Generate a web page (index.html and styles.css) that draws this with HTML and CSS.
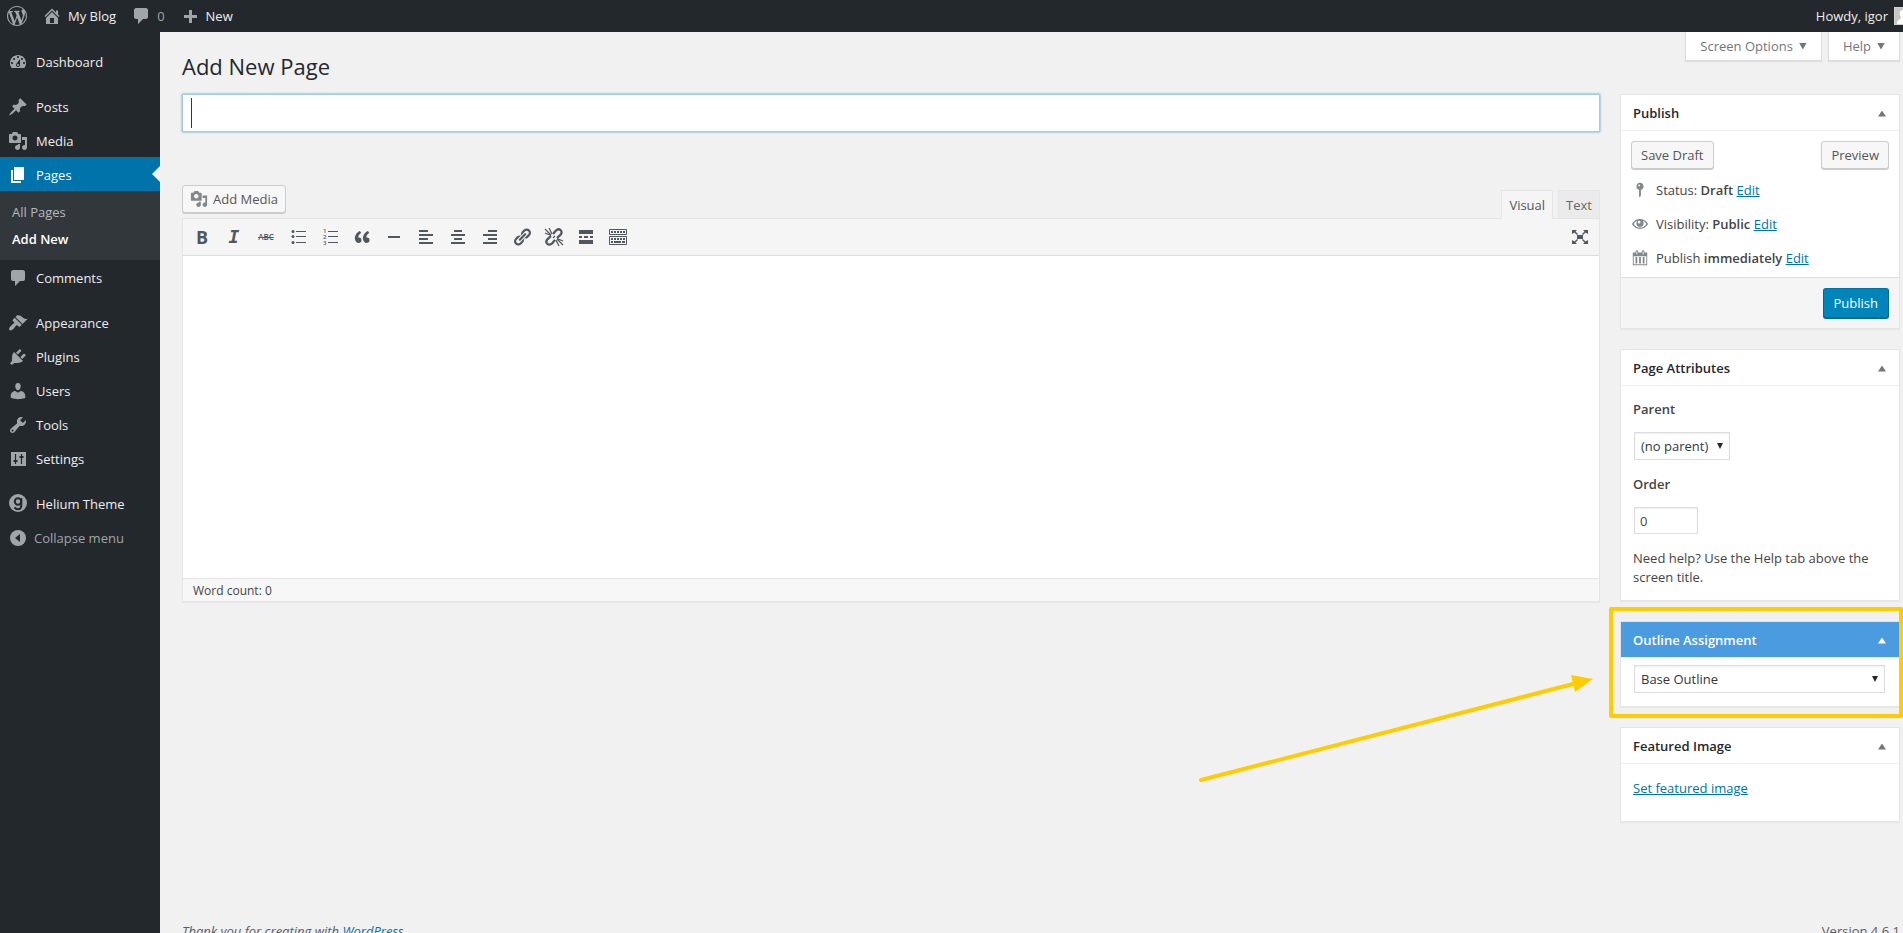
FILE: index.html
```
<!DOCTYPE html>
<html lang="en">
<head>
<meta charset="utf-8">
<title>Add New Page</title>
<link rel="stylesheet" href="styles.css">
</head>
<body>
<svg class="sprite" aria-hidden="true">
  <symbol id="media" viewBox="0 0 20 20"><path d="M13 11V4c0-.55-.45-1-1-1h-1.670L9 1H5L3.670 3H2c-.55 0-1 .45-1 1v7c0 .55.45 1 1 1h10c.55 0 1-.45 1-1zM7 4.500c1.380 0 2.500 1.120 2.500 2.500S8.380 9.500 7 9.500 4.500 8.380 4.500 7 5.620 4.500 7 4.500zM14 6h5v10.500c0 1.380-1.120 2.500-2.500 2.500S14 17.880 14 16.500s1.120-2.500 2.500-2.500c.17 0 .34.02.5.05V9h-3V6zm-4 8.050V13h2v3.500c0 1.380-1.120 2.500-2.500 2.500S7 17.880 7 16.500 8.120 14 9.500 14c.17 0 .34.02.5.05z"/></symbol>
  <symbol id="comment" viewBox="0 0 20 20"><path d="M5 2h10c1 0 2 1 2 2v7c0 1-1 2-2 2h-3l-5 5v-5H5c-1 0-2-1-2-2V4c0-1 1-2 2-2z"/></symbol>
</svg>

<header class="adminbar">
  <a class="bar-item" href="#" aria-label="About WordPress"><svg class="icon" viewBox="0 0 20 20"><path d="M20 10c0-5.510-4.490-10-10-10C4.480 0 0 4.490 0 10c0 5.520 4.480 10 10 10 5.510 0 10-4.480 10-10zM7.780 15.370L4.370 6.220c.55-.02 1.170-.08 1.170-.08.5-.06.44-1.130-.06-1.110 0 0-1.450.11-2.370.11-.18 0-.37 0-.58-.01C4.120 2.690 6.870 1.110 10 1.110c2.330 0 4.450.87 6.050 2.340-.68-.11-1.650.39-1.650 1.580 0 .74.45 1.360.9 2.100.35.61.55 1.360.55 2.460 0 1.490-1.400 5-1.400 5l-3.030-8.370c.54-.02.82-.17.82-.17.5-.05.44-1.250-.06-1.220 0 0-1.440.12-2.380.12-.87 0-2.330-.12-2.330-.12-.5-.03-.56 1.200-.06 1.220l.92.08 1.260 3.410zM17.410 10c.24-.64.74-1.870.43-4.250.7 1.290 1.050 2.710 1.050 4.250 0 3.290-1.730 6.240-4.400 7.780.97-2.590 1.940-5.200 2.920-7.780zM6.100 18.090C3.120 16.650 1.110 13.530 1.110 10c0-1.300.23-2.480.72-3.590C3.250 10.300 4.670 14.200 6.100 18.090zm4.030-6.630l2.580 6.980c-.86.29-1.760.45-2.710.45-.79 0-1.570-.11-2.290-.33.81-2.380 1.620-4.740 2.420-7.100z"/></svg></a>
  <a class="bar-item" href="#"><svg class="icon" viewBox="0 0 20 20"><path fill-rule="evenodd" d="M16 8.500l1.530 1.530-1.060 1.060L10 4.600l-6.470 6.490-1.060-1.060L10 2.500l4 4v-2h2v4zm-6-2.460l6 5.990V18H4v-5.970zM12 17v-5H8v5h4z"/></svg>My Blog</a>
  <a class="bar-item muted" href="#" aria-label="0 comments"><svg class="icon" aria-hidden="true"><use href="#comment"/></svg>0</a>
  <a class="bar-item" href="#"><svg class="icon" viewBox="0 0 20 20"><path d="M17 9v3h-5v5H9v-5H4V9h5V4h3v5z"/></svg>New</a>
  <a class="bar-item account" href="#">Howdy, igor<svg class="avatar" viewBox="0 0 9 18"><path fill="#d2d2d2" d="M0 0h9v18H0z"/><path fill="#c5c5c5" d="M1 1h8v16H1z"/><path fill="#fff" d="M9 3C6 3 5 6 6 8s1 3 0 4-3 1-3 5h6z"/></svg></a>
</header>

<div class="shell">
  <nav class="menu" aria-label="Main menu">
    <a class="item" href="#"><svg class="icon" viewBox="0 0 20 20"><path fill-rule="evenodd" d="M3.760 16h12.480c1.100-1.370 1.760-3.110 1.760-5 0-4.420-3.580-8-8-8s-8 3.580-8 8c0 1.890.66 3.630 1.760 5zM10 4c.55 0 1 .45 1 1s-.45 1-1 1-1-.45-1-1 .45-1 1-1zM6 6c.55 0 1 .45 1 1s-.45 1-1 1-1-.45-1-1 .45-1 1-1zm8 0c.55 0 1 .45 1 1s-.45 1-1 1-1-.45-1-1 .45-1 1-1zm-5.370 5.550L12 7v6c0 1.100-.9 2-2 2s-2-.9-2-2c0-.57.24-1.080.63-1.450zM4 10c.55 0 1 .45 1 1s-.45 1-1 1-1-.45-1-1 .45-1 1-1zm12 0c.55 0 1 .45 1 1s-.45 1-1 1-1-.45-1-1 .45-1 1-1zm-5 3c0-.55-.45-1-1-1s-1 .45-1 1 .45 1 1 1 1-.45 1-1z"/></svg>Dashboard</a>
    <a class="item spaced" href="#"><svg class="icon" viewBox="0 0 20 20"><path d="M10.440 3.020l1.820-1.820 6.360 6.350-1.830 1.820c-1.050-.68-2.480-.57-3.410.36l-.75.75c-.92.93-1.040 2.350-.35 3.410l-1.830 1.820-2.410-2.410-2.800 2.790c-.42.42-3.380 2.710-3.800 2.290s1.860-3.390 2.280-3.810l2.790-2.790L4.100 9.360l1.830-1.820c1.050.69 2.480.57 3.400-.36l.75-.75c.93-.92 1.050-2.350.36-3.410z"/></svg>Posts</a>
    <a class="item" href="#"><svg class="icon"><use href="#media"/></svg>Media</a>
    <a class="item current" href="#" aria-current="page"><svg class="icon" viewBox="0 0 20 20"><path d="M6 15V2h10v13H6zm-1 1h8v2H3V5h2v11z"/></svg>Pages</a>
    <div class="submenu">
      <a href="#">All Pages</a>
      <a class="active" href="#">Add New</a>
    </div>
    <a class="item" href="#"><svg class="icon"><use href="#comment"/></svg>Comments</a>
    <a class="item spaced" href="#"><svg class="icon" viewBox="0 0 20 20"><path d="M14.480 11.060L7.410 3.990l1.500-1.500c.5-.56 2.300-.47 3.510.32 1.210.8 1.430 1.280 2.910 2.100 1.180.64 2.450 1.260 4.450.85zm-.71.71L6.700 4.700 4.930 6.470c-.39.39-.39 1.020 0 1.410l1.060 1.060c.39.39.39 1.030 0 1.420-.6.6-1.430 1.110-2.210 1.690-.35.26-.7.53-1.010.84C1.430 14.230.4 16.080 1.400 17.070c.99 1 2.840-.03 4.180-1.360.31-.31.58-.66.85-1.020.57-.78 1.080-1.610 1.690-2.210.39-.39 1.020-.39 1.410 0l1.060 1.060c.39.39 1.020.39 1.410 0z"/></svg>Appearance</a>
    <a class="item" href="#"><svg class="icon" viewBox="0 0 20 20"><path d="M13.110 4.360L9.870 7.600 8 5.730l3.240-3.240c.35-.34 1.050-.2 1.560.32.52.51.66 1.210.31 1.550zm-8 1.770l.91-1.120 9.010 9.010-1.190.84c-.71.71-2.630 1.160-3.820 1.160H6.140L4.900 17.260c-.59.59-1.540.59-2.120 0-.59-.58-.59-1.530 0-2.120l1.240-1.240v-3.880c0-1.130.4-3.190 1.090-3.890zm7.260 3.970l3.240-3.240c.34-.35 1.040-.21 1.550.31.52.51.66 1.210.31 1.550l-3.240 3.250z"/></svg>Plugins</a>
    <a class="item" href="#"><svg class="icon" viewBox="0 0 20 20"><path d="M10 9.250c-2.270 0-2.730-3.440-2.730-3.440C7 4.020 7.820 2 9.970 2c2.160 0 2.980 2.020 2.710 3.810 0 0-.41 3.440-2.680 3.440zm0 2.570L12.720 10c2.390 0 4.520 2.330 4.520 4.530v2.490s-3.650 1.130-7.240 1.130c-3.650 0-7.240-1.130-7.240-1.130v-2.490c0-2.250 1.940-4.480 4.470-4.480z"/></svg>Users</a>
    <a class="item" href="#"><svg class="icon" viewBox="0 0 20 20"><path fill-rule="evenodd" d="M16.680 9.770c-1.340 1.340-3.300 1.670-4.950.99l-5.410 6.520c-.99.99-2.590.99-3.580 0s-.99-2.590 0-3.570l6.520-5.420c-.68-1.650-.35-3.610.99-4.950 1.280-1.280 3.120-1.620 4.720-1.060l-2.890 2.890 2.820 2.820 2.860-2.870c.53 1.580.18 3.390-1.080 4.650zM3.810 16.210c.4.39 1.040.39 1.430 0 .4-.4.4-1.040 0-1.430-.39-.4-1.030-.4-1.430 0-.39.39-.39 1.030 0 1.430z"/></svg>Tools</a>
    <a class="item" href="#"><svg class="icon" viewBox="0 0 20 20"><path d="M3 3h15v14H3z"/><path fill="none" stroke="#23282d" stroke-width="1.200" d="M7.500 5v10M13.500 5v10"/><path fill="#23282d" d="M5.500 11h4v2h-4zM11.500 7h4v2h-4z"/></svg>Settings</a>
    <a class="item spaced" href="#"><svg class="icon" viewBox="0 0 20 20"><circle cx="10" cy="9" r="9"/><g fill="none" stroke="#23282d" stroke-width="2"><circle cx="10" cy="7.500" r="3.200"/><path d="M13.300 4v7c0 3-1 4.200-3.300 4.200-1.500 0-2.500-.5-3.500-1.700"/></g></svg>Helium Theme</a>
    <button class="item collapse" type="button"><svg class="icon" viewBox="0 0 20 20"><circle cx="10" cy="10" r="8"/><path fill="#23282d" d="M12 6v8l-5-4z"/></svg>Collapse menu</button>
  </nav>

  <main class="content">
    <div class="page-head">
      <h1>Add New Page</h1>
      <div class="screen-links">
        <button type="button">Screen Options<span class="tri down"></span></button>
        <button type="button">Help<span class="tri down"></span></button>
      </div>
    </div>

    <div class="columns">
      <section class="editor-col">
        <div class="title-wrap"><input type="text" aria-label="Enter title here"></div>
        <div class="editor-tools">
          <button class="button" type="button"><svg class="icon"><use href="#media"/></svg>Add Media</button>
          <div class="tabs">
            <button class="tab on" type="button">Visual</button>
            <button class="tab" type="button">Text</button>
          </div>
        </div>
        <div class="editor">
          <div class="toolbar">
            <button type="button" class="bold" aria-label="Bold">B</button>
            <button type="button" class="italic" aria-label="Italic">I</button>
            <button type="button" class="strike" aria-label="Strikethrough">ABC</button>
            <button type="button" aria-label="Bulleted list"><svg viewBox="0 0 20 20"><path d="M8 4h10v1H8zM8 9h10v1H8zM8 15h10v1H8z"/><circle cx="5" cy="4.500" r="1.500"/><circle cx="5" cy="9.500" r="1.500"/><circle cx="5" cy="15.500" r="1.500"/></svg></button>
            <button type="button" aria-label="Numbered list"><svg viewBox="0 0 20 20"><path d="M8 4h10v1H8zM8 9h10v1H8zM8 15h10v1H8z"/><g class="digits"><text x="3" y="6">1</text><text x="3" y="12">2</text><text x="3" y="18">3</text></g></svg></button>
            <button type="button" aria-label="Blockquote"><svg viewBox="0 0 20 20"><path d="M9.490 13.220c0-.74-.2-1.380-.61-1.900-.62-.78-1.830-.88-2.530-.72-.29-1.650 1.110-3.750 2.920-4.650L7.880 4c-2.730 1.300-5.420 4.280-4.960 8.050C3.210 14.430 4.590 16 6.540 16c.85 0 1.560-.25 2.120-.75s.83-1.180.83-2.030zm8.050 0c0-.74-.2-1.380-.61-1.900-.63-.78-1.830-.88-2.530-.72-.29-1.650 1.110-3.750 2.920-4.650L15.930 4c-2.730 1.300-5.410 4.280-4.950 8.050.29 2.380 1.660 3.950 3.610 3.950.85 0 1.560-.25 2.120-.75s.83-1.180.83-2.030z"/></svg></button>
            <button type="button" aria-label="Horizontal line"><svg viewBox="0 0 20 20"><path d="M4 9h12v2H4z"/></svg></button>
            <button type="button" aria-label="Align left"><svg viewBox="0 0 20 20"><path d="M12 5V3H3v2h9zm5 4V7H3v2h14zm-5 4v-2H3v2h9zm5 4v-2H3v2h14z"/></svg></button>
            <button type="button" aria-label="Align center"><svg viewBox="0 0 20 20"><path d="M14 5V3H6v2h8zm3 4V7H3v2h14zm-3 4v-2H6v2h8zm3 4v-2H3v2h14z"/></svg></button>
            <button type="button" aria-label="Align right"><svg viewBox="0 0 20 20"><path d="M17 5V3H8v2h9zm0 4V7H3v2h14zm0 4v-2H8v2h9zm0 4v-2H3v2h14z"/></svg></button>
            <button type="button" aria-label="Insert link"><svg viewBox="0 0 20 20"><path d="M17.740 2.760c1.680 1.690 1.680 4.410 0 6.100l-1.530 1.520c-1.120 1.120-2.700 1.470-4.140 1.090l2.620-2.610.76-.77.76-.76c.84-.84.84-2.200 0-3.040-.84-.85-2.200-.85-3.040 0l-.77.76-3.380 3.380c-.37-1.440-.02-3.020 1.100-4.140l1.520-1.530c1.690-1.680 4.420-1.680 6.100 0zM8.590 13.430l5.340-5.340c.42-.42.42-1.100 0-1.520-.44-.43-1.130-.39-1.530 0l-5.330 5.340c-.42.42-.42 1.100 0 1.520.44.43 1.130.39 1.520 0zm-.76 2.290l4.140-4.150c.38 1.440.03 3.020-1.090 4.140l-1.520 1.530c-1.690 1.680-4.410 1.680-6.100 0-1.680-1.680-1.680-4.420 0-6.100l1.530-1.520c1.120-1.120 2.700-1.470 4.140-1.100l-4.140 4.150c-.85.84-.85 2.200 0 3.050.84.84 2.200.84 3.040 0z"/></svg></button>
            <button type="button" aria-label="Remove link"><svg viewBox="0 0 20 20"><g fill="none" stroke="currentColor" stroke-width="2.300"><path d="M9 7l3-3.500c1.500-1.500 3.500-1.500 4.700-.3s1.200 3.200-.3 4.700L13 11M11 13l-3 3.500c-1.500 1.500-3.500 1.500-4.700.3s-1.200-3.200.3-4.700L7 9"/><path stroke-width="1.200" d="M1 2l6 6M5 1l3 6M1 6l6 2.500M19 18l-6-6M15 19l-3-6M19 14l-6-2.500M9 11l2-2"/></g></svg></button>
            <button type="button" aria-label="Insert Read More tag"><svg viewBox="0 0 20 20"><path d="M17 7V3H3v4h14zM6 11V9H3v2h3zm6 0V9H8v2h4zm5 0V9h-3v2h3zm0 6v-4H3v4h14z"/></svg></button>
            <button type="button" aria-label="Toolbar toggle"><svg viewBox="0 0 20 20"><g fill="none" stroke="currentColor"><path d="M1.500 2.500h17v5h-17zM1.500 9.500h17v8h-17z"/><path stroke-width="2" stroke-dasharray="2 1" d="M3 5h14"/><path stroke-width="2" stroke-dasharray="2 1" d="M3 12h14"/><path stroke-width="2" d="M3 15h2M6 15h7M14 15h3"/></g></svg></button>
            <button type="button" class="fullscreen" aria-label="Distraction-free writing"><svg viewBox="0 0 20 20"><path d="M7 8h6v4H7zM2 3h5L5.500 4.500 8 7 7 8 4.500 5.500 2 7zM18 3v4l-2.500-1.500L13 8l-1-1 2.500-2.500L13 3zM2 17v-4l2.500 1.500L7 12l1 1-2.500 2.500L7 17zM18 17h-5l1.500-1.500L12 13l1-1 2.500 2.500L18 13z"/></svg></button>
          </div>
          <textarea aria-label="Page content"></textarea>
          <div class="status">Word count: 0</div>
        </div>
      </section>

      <aside class="side">
        <section class="box">
          <h2>Publish<span class="tri up"></span></h2>
          <div class="publish-top">
            <div class="row"><button class="button" type="button">Save Draft</button><button class="button" type="button">Preview</button></div>
            <p><svg class="icon" viewBox="0 0 20 20"><path fill-rule="evenodd" d="M14 6c0 1.860-1.280 3.410-3 3.860V16c0 1-2 2-2 2V9.860c-1.720-.45-3-2-3-3.860 0-2.210 1.790-4 4-4s4 1.790 4 4zM8 5c0 .55.45 1 1 1s1-.45 1-1-.45-1-1-1-1 .45-1 1z"/></svg><span>Status: <b>Draft</b> <a href="#">Edit</a></span></p>
            <p><svg class="icon" viewBox="0 0 20 20"><path fill-rule="evenodd" d="M1 10c2-3.500 5.400-5.500 9-5.500s7 2 9 5.500c-2 3.500-5.400 5.500-9 5.500S3 13.500 1 10zm2 0c1.500 2.700 4 4 7 4s5.500-1.300 7-4c-1-1.800-2.300-2.900-4-3.500.6.800 1 1.600 1 2.600a4 4 0 0 1-8 0c0-1 .4-1.800 1-2.600C5.300 7.100 4 8.200 3 10zm6-3.500a1.500 1.500 0 1 0 0 3 1.500 1.500 0 0 0 0-3z"/></svg><span>Visibility: <b>Public</b> <a href="#">Edit</a></span></p>
            <p><svg class="icon" viewBox="0 0 20 20"><path fill-rule="evenodd" d="M15 4h3v14H2V4h3V3c0-.83.67-1.500 1.500-1.500S8 2.170 8 3v1h4V3c0-.83.67-1.500 1.500-1.500S15 2.170 15 3v1zM6 3v2.500c0 .28.22.5.5.5s.5-.22.5-.5V3c0-.28-.22-.5-.5-.5S6 2.720 6 3zm7 0v2.500c0 .28.22.5.5.5s.5-.22.5-.5V3c0-.28-.22-.5-.5-.5s-.5.22-.5.5zm4 14V8H3v9h14z"/><path d="M5 9h2v7H5zM9 9h2v7H9zM13 9h2v7h-2z"/></svg><span>Publish <b>immediately</b> <a href="#">Edit</a></span></p>
          </div>
          <div class="publish-foot"><button class="button primary" type="button">Publish</button></div>
        </section>

        <section class="box">
          <h2>Page Attributes<span class="tri up"></span></h2>
          <div class="inside">
            <label for="parent">Parent</label>
            <span class="select"><select id="parent"><option>(no parent)</option></select></span>
            <label for="order">Order</label>
            <input id="order" class="order" type="text" value="0">
            <p class="hint">Need help? Use the Help tab above the screen title.</p>
          </div>
        </section>

        <section class="box outline">
          <h2>Outline Assignment<span class="tri up"></span></h2>
          <div class="outline-body"><span class="select wide"><select aria-label="Outline"><option>Base Outline</option></select></span></div>
          <div class="frame"></div>
          <svg class="arrow" viewBox="0 0 400 114"><path fill="none" stroke="#fc0" stroke-width="4" stroke-linecap="round" d="M6 109L382 12"/><path fill="#fc0" d="M398 8l-22-4 4 17z"/></svg>
        </section>

        <section class="box">
          <h2>Featured Image<span class="tri up"></span></h2>
          <div class="featured"><a href="#">Set featured image</a></div>
        </section>
      </aside>
    </div>

    <footer class="footer"><em>Thank you for creating with <a href="#">WordPress</a>.</em><span>Version 4.6.1</span></footer>
  </main>
</div>
</body>
</html>
```
FILE: styles.css
```
* { box-sizing: border-box; }
body {
  margin: 0;
  height: 100vh;
  overflow: hidden;
  background: #f1f1f1;
  color: #444;
  font: 13px/20px "Open Sans", "Noto Sans", sans-serif;
}
button, input, select, textarea { font: inherit; color: inherit; margin: 0; }
button { cursor: pointer; }
a { color: #0073aa; }
b { font-weight: 600; }
h1, h2, p { margin: 0; }
svg { display: block; fill: currentColor; flex: none; }
.sprite { display: none; }
.icon { width: 20px; height: 20px; }

.adminbar { display: flex; height: 32px; padding-left: 7px; background: #23282d; }
.bar-item { display: flex; align-items: center; gap: 6px; margin-right: 15px; color: #eee; text-decoration: none; }
.bar-item .icon, .muted { color: #a0a5aa; }
.account { margin: 0 0 0 auto; }
.avatar { width: 9px; height: 18px; }

.shell { display: flex; min-height: calc(100vh - 32px); }
.menu { width: 160px; flex: none; padding-top: 12px; background: #23282d; }
.item {
  display: flex;
  align-items: center;
  gap: 8px;
  width: 100%;
  height: 34px;
  padding: 1px 8px 0;
  border: 0;
  background: none;
  color: #eee;
  text-decoration: none;
  position: relative;
}
.item .icon { color: #a0a5aa; }
.spaced { margin-top: 11px; }
.current { background: #0073aa; color: #fff; }
.current .icon { color: #fff; }
.current::after {
  content: "";
  position: absolute;
  right: 0;
  top: 9px;
  border: 8px solid transparent;
  border-left: 0;
  border-right-color: #f1f1f1;
}
.submenu { padding: 8px 12px 7px; background: #32373c; }
.submenu a { display: block; line-height: 27px; color: #b4b9be; text-decoration: none; }
.submenu .active { color: #fff; font-weight: 600; }
.collapse { color: #a0a5aa; gap: 6px; }

.content { flex: 1; min-width: 0; padding: 0 3px 0 22px; }
.page-head { display: flex; justify-content: space-between; height: 62px; }
.page-head h1 { padding-top: 19px; color: #23282d; font-size: 22px; font-weight: 400; line-height: 30px; }
.screen-links { display: flex; gap: 6px; }
.screen-links button {
  display: flex;
  align-items: center;
  gap: 6px;
  height: 29px;
  padding: 0 14px;
  border: 1px solid #ddd;
  border-top: 0;
  background: #fff;
  box-shadow: 0 1px 1px rgba(0, 0, 0, .08);
  color: #72777c;
}
.tri { width: 8px; height: 7px; background: #72777c; }
.down { clip-path: polygon(0 0, 100% 0, 50% 100%); }
.up { height: 6px; margin-top: 2px; clip-path: polygon(0 100%, 100% 100%, 50% 0); }

.columns { display: grid; grid-template-columns: minmax(0, 1fr) 280px; gap: 20px; }
.title-wrap { position: relative; }
.title-wrap::before { content: ""; position: absolute; left: 9px; top: 4px; width: 1px; height: 30px; background: #32373c; }
.title-wrap input {
  display: block;
  width: 100%;
  height: 38px;
  padding: 3px 8px;
  border: 1px solid #a6cbe0;
  background: #fff;
  box-shadow: 0 0 2px rgba(30, 140, 190, .8);
  font-size: 22px;
  outline: 0;
}
.editor-tools { display: flex; justify-content: space-between; align-items: flex-end; margin-top: 53px; }
.editor-tools .button { margin-bottom: 5px; padding: 0 7px; }
.editor-tools .icon { width: 18px; height: 18px; color: #82878c; }
.tabs { display: flex; gap: 5px; }
.tab { height: 28px; padding: 0 7px; border: 1px solid #e5e5e5; border-bottom: 0; background: #ebebeb; color: #666; }
.tab.on { position: relative; margin-bottom: -1px; height: 29px; background: #f5f5f5; color: #555; }
.button {
  display: flex;
  align-items: center;
  gap: 5px;
  height: 28px;
  padding: 0 9px;
  border: 1px solid #ccc;
  border-radius: 3px;
  background: #f7f7f7;
  box-shadow: 0 1px 0 #ccc;
  color: #555;
}
.primary {
  height: 30px;
  padding: 0 10px;
  border-color: #0073aa #006799 #006799;
  background: #0085ba;
  box-shadow: 0 1px 0 #006799;
  color: #fff;
}

.editor { border: 1px solid #e5e5e5; box-shadow: 0 1px 1px rgba(0, 0, 0, .04); }
.toolbar { display: flex; height: 37px; padding: 0 3px; border-bottom: 1px solid #ddd; background: #f5f5f5; }
.toolbar button {
  display: flex;
  align-items: center;
  justify-content: center;
  width: 32px;
  padding: 0;
  border: 0;
  background: none;
  color: #50575e;
}
.toolbar svg { width: 20px; height: 20px; }
.toolbar .bold { font-size: 18px; font-weight: 700; }
.toolbar .italic { font: italic 700 18px/20px "DejaVu Sans Mono", monospace; }
.toolbar .strike { font-size: 8px; font-weight: 600; text-decoration: line-through; }
.digits { font-size: 6px; font-weight: 600; }
.toolbar .fullscreen { margin-left: auto; }
.editor textarea { display: block; width: 100%; height: 322px; border: 0; background: #fff; resize: none; outline: 0; }
.status { height: 23px; padding: 0 10px; border-top: 1px solid #e5e5e5; background: #f7f7f7; font-size: 12px; line-height: 23px; }

.side { display: flex; flex-direction: column; gap: 20px; }
.box { border: 1px solid #e5e5e5; background: #fff; box-shadow: 0 1px 1px rgba(0, 0, 0, .04); }
.box h2 {
  display: flex;
  align-items: center;
  justify-content: space-between;
  height: 36px;
  padding: 0 13px 0 12px;
  border-bottom: 1px solid #eee;
  color: #23282d;
  font-size: 13px;
  font-weight: 600;
}
.publish-top { padding: 10px 10px 2px; }
.row { display: flex; justify-content: space-between; margin-bottom: 4px; }
.publish-top p { display: flex; align-items: center; gap: 7px; height: 34px; }
.publish-top .icon { width: 18px; height: 18px; color: #82878c; }
.publish-foot { display: flex; justify-content: flex-end; padding: 10px; border-top: 1px solid #ddd; background: #f5f5f5; }
.inside { display: flex; flex-direction: column; align-items: flex-start; padding: 13px 12px; }
.inside label { font-weight: 600; margin-bottom: 13px; }
.select { position: relative; display: block; margin-left: 1px; }
.select select {
  appearance: none;
  display: block;
  width: 100%;
  height: 28px;
  padding: 0 20px 0 6px;
  border: 1px solid #ddd;
  border-radius: 0;
  background: #fff;
  box-shadow: inset 0 1px 2px rgba(0, 0, 0, .07);
  color: #32373c;
}
.select::after {
  content: "";
  position: absolute;
  right: 7px;
  top: 11px;
  width: 6px;
  height: 6px;
  background: #23282d;
  clip-path: polygon(0 0, 100% 0, 50% 100%);
  pointer-events: none;
}
.inside .select { margin-bottom: 14px; }
.order { width: 64px; height: 27px; margin: 0 0 15px 1px; padding: 3px 5px; border: 1px solid #ddd; box-shadow: inset 0 1px 2px rgba(0, 0, 0, .07); }
.hint { line-height: 19px; }

.outline { position: relative; }
.box.outline h2 { background: #4b9be0; color: #fff; }
.outline .tri { background: #fff; }
.outline-body { padding: 7px 14px 13px 12px; }
.frame { position: absolute; inset: -15px -4px -12px -12px; border: 4px solid #fc0; border-radius: 2px; }
.arrow { position: absolute; right: calc(100% + 26px); top: 49px; width: 400px; height: 114px; }
.featured { padding: 14px 12px 23px; }

.footer { display: flex; justify-content: space-between; margin-top: 99px; color: #555d66; }
.footer a { text-decoration: none; }
```
